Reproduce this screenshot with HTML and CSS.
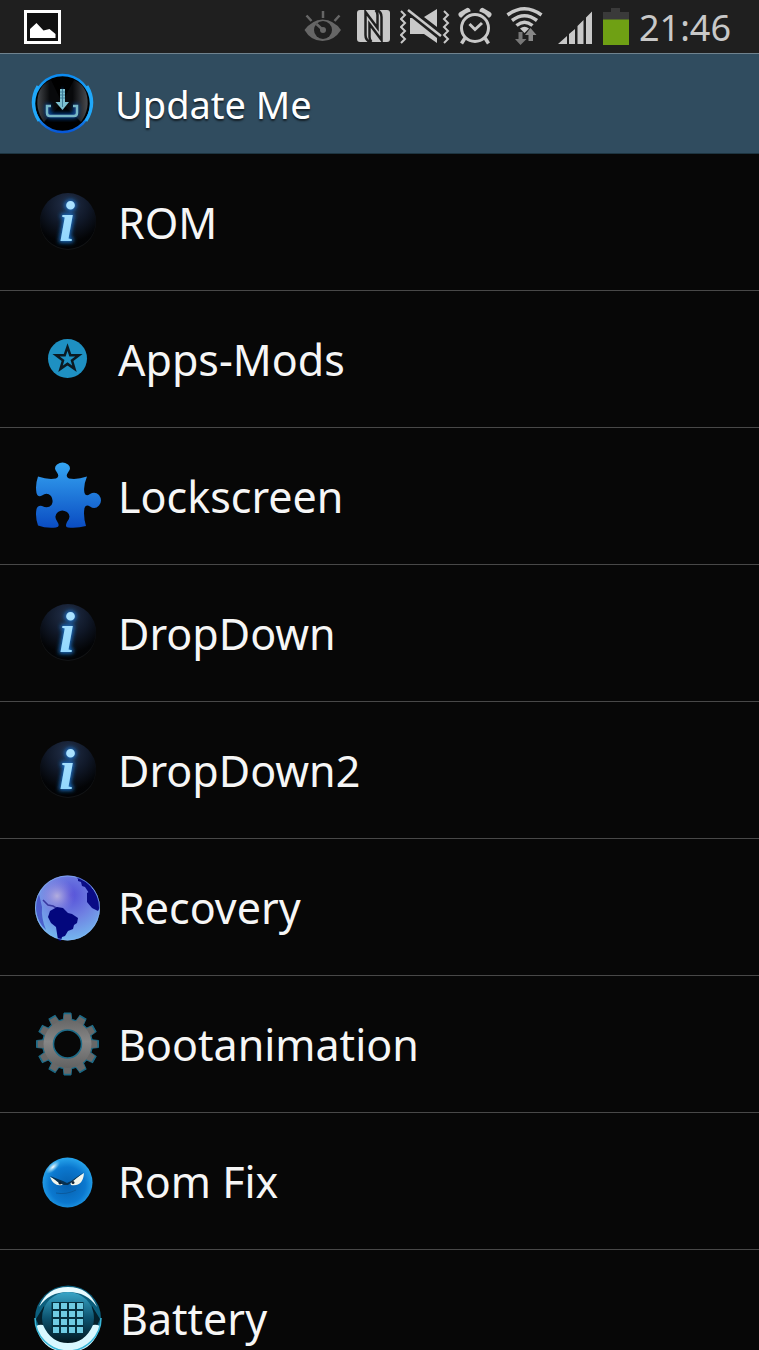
FILE: index.html
```html
<!DOCTYPE html>
<html lang="en">
<head>
    <meta charset="UTF-8">
    <meta name="viewport" content="width=device-width, initial-scale=1.0">
    <title>Update Me</title>
    <link rel="stylesheet" href="styles.css">
</head>
<body>
    <!-- shared icon shapes -->
    <svg class="defs" width="0" height="0" aria-hidden="true">
        <defs>
            <radialGradient id="ballFill" cx="50%" cy="20%" r="75%">
                <stop offset="0" stop-color="#22304a"/>
                <stop offset="0.5" stop-color="#101828"/>
                <stop offset="0.9" stop-color="#030406"/>
                <stop offset="1" stop-color="#020305"/>
            </radialGradient>
            <linearGradient id="infoFill" x1="0" y1="0" x2="0" y2="1">
                <stop offset="0" stop-color="#b4e6ff"/>
                <stop offset="1" stop-color="#8ad4fd"/>
            </linearGradient>
            <filter id="glow" x="-50%" y="-50%" width="200%" height="200%">
                <feGaussianBlur stdDeviation="2"/>
            </filter>
            <symbol id="info" viewBox="0 0 68 68">
                <circle cx="35" cy="34" r="28" fill="#131517"/>
                <circle cx="35" cy="33" r="28" fill="url(#ballFill)"/>
                <text x="26" y="53" class="info-letter info-glow" filter="url(#glow)">i</text>
                <text x="26" y="53" class="info-letter" fill="url(#infoFill)">i</text>
            </symbol>
            <g id="tooth">
                <path d="M30 12L31 3h7l1 9zM30 55l1 10h7l1-10z"/>
            </g>
            <g id="gear">
                <circle cx="34.5" cy="34" r="25"/>
                <use href="#tooth"/>
                <use href="#tooth" transform="rotate(30 34.5 34)"/>
                <use href="#tooth" transform="rotate(60 34.5 34)"/>
                <use href="#tooth" transform="rotate(90 34.5 34)"/>
                <use href="#tooth" transform="rotate(120 34.5 34)"/>
                <use href="#tooth" transform="rotate(150 34.5 34)"/>
            </g>
        </defs>
    </svg>

    <div class="screen">
        <div class="status-bar">
            <svg class="picture" width="38" height="53" viewBox="0 0 38 53" aria-hidden="true">
                <rect x="1.5" y="11.5" width="34" height="31" fill="#111" stroke="#fff" stroke-width="3"/>
                <path d="M6 38V29l6.500-6 7 7.500 6-1.500 6 5v4z" fill="#fff"/>
            </svg>
            <div class="status-icons">
                <svg width="46" height="53" viewBox="0 0 46 53" aria-hidden="true">
                    <path d="M1.500 30Q9 20 19.500 19.500 31 20 38 30 31 41 19.500 41 8 41 1.500 30z" fill="#666"/>
                    <circle cx="20" cy="30" r="9" fill="#1f1f1f"/>
                    <circle cx="20" cy="30" r="3" fill="#666"/>
                    <path d="M20 30L13.500 24M3.500 15.500l5 5.500M20 11v7M36.500 15.500l-5 5.500" stroke="#666" stroke-width="2.500"/>
                </svg>
                <svg width="35" height="53" viewBox="0 0 35 53" aria-hidden="true">
                    <rect y="10" width="33" height="32" rx="3" fill="#c8c8c8"/>
                    <path d="M13 42Q8.500 40 8.500 35V12L20.500 28V15q0-3-2-5" fill="none" stroke="#1f1f1f" stroke-width="2.500"/>
                    <path d="M20 10q4.500 2 4.500 7v23L12.500 24v13q0 3 2 5" fill="none" stroke="#1f1f1f" stroke-width="2.500"/>
                </svg>
                <svg width="50" height="53" viewBox="0 0 50 53" aria-hidden="true">
                    <path d="M10 18v16h14l13 9v-5L12 18zM37 9v18L24 17z" fill="#c8c8c8"/>
                    <path d="M8 10l33 26" stroke="#1f1f1f" stroke-width="6"/>
                    <path d="M8 10l33 26" stroke="#c8c8c8" stroke-width="2.500"/>
                    <path d="M1 11l4 4-4 4 4 4-4 4 4 4-4 4 4 4-4 4M44 11l4 4-4 4 4 4-4 4 4 4-4 4 4 4-4 4" fill="none" stroke="#c8c8c8" stroke-width="2"/>
                </svg>
                <svg width="36" height="53" viewBox="0 0 36 53" aria-hidden="true">
                    <path d="M3.500 14.500l6-3.500M30.500 14.500l-6-3.500" stroke="#c8c8c8" stroke-width="6" stroke-linecap="round"/>
                    <circle cx="17" cy="28" r="17" fill="#1f1f1f"/>
                    <circle cx="17" cy="28" r="13.500" fill="none" stroke="#c8c8c8" stroke-width="3"/>
                    <path d="M11.500 24l5.500 5.500 7-6.500" fill="none" stroke="#c8c8c8" stroke-width="3"/>
                    <path d="M7 38l-3.500 5.500M27 38l3.500 5.500" stroke="#c8c8c8" stroke-width="3.500"/>
                </svg>
                <svg width="45" height="53" viewBox="0 0 45 53" aria-hidden="true">
                    <path d="M5.500 15q17-12.500 34 0M10 20.500q12.500-9.500 25 0M14.500 25.500q8-6.500 16 0" fill="none" stroke="#c8c8c8" stroke-width="3.500"/>
                    <path d="M18 28.500q4.500-3.500 9 0L22.500 33z" fill="#c8c8c8"/>
                    <path d="M16.500 32h4v7h4L18.500 45 13 39h3.500z" fill="#777"/>
                    <path d="M26.500 41v-6H23l5.500-7 6 7H31v6z" fill="#888"/>
                </svg>
                <svg width="40" height="53" viewBox="0 0 40 53" aria-hidden="true">
                    <path d="M3 44l9-8v8zM14 44V34l6-5v15zM22.500 44V26l6-6v24zM31 44V17.500l6-6V44z" fill="#c8c8c8"/>
                </svg>
                <svg width="28" height="53" viewBox="0 0 28 53" aria-hidden="true">
                    <path d="M0 12h8V8h9v4h9v8H0z" fill="#3a3a3a"/>
                    <path d="M0 19.500h26V45H0z" fill="#6fa014"/>
                </svg>
                <time class="clock">21:46</time>
            </div>
        </div>

        <header class="title-bar">
            <svg width="64" height="64" viewBox="0 0 64 64" aria-hidden="true">
                <defs>
                    <linearGradient id="ring" x1="0" y1="0" x2="0" y2="1">
                        <stop offset="0" stop-color="#0c8af0"/>
                        <stop offset="0.5" stop-color="#25b9ff"/>
                        <stop offset="1" stop-color="#0757d8"/>
                    </linearGradient>
                    <linearGradient id="lens" x1="0" y1="0" x2="1" y2="0">
                        <stop offset="0" stop-color="#44474b"/>
                        <stop offset="0.25" stop-color="#08090b"/>
                        <stop offset="0.7" stop-color="#08090b"/>
                        <stop offset="1" stop-color="#4a4c50"/>
                    </linearGradient>
                </defs>
                <circle cx="31.500" cy="31.500" r="28.500" fill="#000" stroke="url(#ring)" stroke-width="2.500"/>
                <path d="M7 14Q-3 31 8 49M56 14q10 17-1 35" fill="none" stroke="#20a8fa" stroke-width="3"/>
                <path d="M8 20Q12 11 20 8L31 31 13 50Q3 36 8 20zM55 20Q51 11 43 8L31 31 50 50Q60 36 55 20z" fill="url(#lens)"/>
                <path d="M17 32v9q0 3 3 3h22q3 0 3-3v-9" fill="none" stroke="#0b4aa0" stroke-width="5" filter="url(#glow)"/>
                <path d="M31 18v14h1" stroke="#0b4aa0" stroke-width="7" filter="url(#glow)"/>
                <path d="M20 34h-4v7q0 3 3 3h24q3 0 3-3v-7h-4" fill="none" stroke="#76b6c5" stroke-width="2.500"/>
                <path d="M29 17h5v13h4l-6.500 8-7-8H29z" fill="#7cc0d0"/>
                <path d="M31.500 17v18M29 20h5M29 23h5M29 26h5" stroke="#417f9a" stroke-width="1"/>
            </svg>
            <h1>Update Me</h1>
        </header>

        <nav class="menu">
            <a href="#rom">
                <svg class="icon" viewBox="0 0 68 68" aria-hidden="true"><use href="#info"/></svg>
                ROM
            </a>
            <a href="#apps">
                <svg class="icon" viewBox="0 0 68 68" aria-hidden="true">
                    <circle cx="34.500" cy="33.500" r="19.500" fill="#1e90c2"/>
                    <path d="M34.500 22l2.800 8.200 8.600.1-6.900 5.200 2.500 8.300-7-4.900-7 4.900 2.500-8.300-6.900-5.200 8.600-.1z" fill="#1e90c2" stroke="#0b1a22" stroke-width="2.500"/>
                </svg>
                Apps-Mods
            </a>
            <a href="#lockscreen">
                <svg class="icon" viewBox="0 0 68 68" aria-hidden="true">
                    <defs>
                        <linearGradient id="puzzle" x1="0" y1="0" x2="0" y2="1">
                            <stop offset="0" stop-color="#35a5f2"/>
                            <stop offset="1" stop-color="#0a4cc2"/>
                        </linearGradient>
                    </defs>
                    <path d="M5 14.500Q15 18 23 16.500 27 15 24 10.500 20 6 24 2.500 29.500-1.500 35 2.500 39 6 35 10.500 32 15 36 16.500 44 18 54 14.500 50 24 51.500 31 53 35 57 32 62 29 66 33 70 38.500 66 43.500 62 48 57 44.500 53 42 51.500 46 50 54 53 64 44 66.500 35 65.500 31.500 65 34 60 39 54 34 50 29 47 25 50 20 54 24.500 60 27.500 65 23 65.500 13 66.500 5 63.500 2 55 3.500 47 5 43 9 44 15 47 18.500 43 21 38.500 18 34 14 30 9 33.500 5 36 3.500 31 2 23 5 14.500z" fill="url(#puzzle)"/>
                </svg>
                Lockscreen
            </a>
            <a href="#dropdown">
                <svg class="icon" viewBox="0 0 68 68" aria-hidden="true"><use href="#info"/></svg>
                DropDown
            </a>
            <a href="#dropdown2">
                <svg class="icon" viewBox="0 0 68 68" aria-hidden="true"><use href="#info"/></svg>
                DropDown2
            </a>
            <a href="#recovery">
                <svg class="icon" viewBox="0 0 68 68" aria-hidden="true">
                    <defs>
                        <radialGradient id="ocean" cx="55%" cy="30%" r="68%">
                            <stop offset="0" stop-color="#5550d8"/>
                            <stop offset="0.5" stop-color="#6f80e2"/>
                            <stop offset="1" stop-color="#74b4ee"/>
                        </radialGradient>
                        <radialGradient id="shine" cx="50%" cy="50%" r="50%">
                            <stop offset="0" stop-color="#b3aede"/>
                            <stop offset="1" stop-color="#8b86e0" stop-opacity="0"/>
                        </radialGradient>
                    </defs>
                    <circle cx="34.500" cy="35" r="32.500" fill="url(#ocean)"/>
                    <circle cx="24" cy="23" r="18" fill="url(#shine)"/>
                    <path d="M6 21Q2 28 3 38 5 50 13 57 8 45 9 34z" fill="#3030b8" opacity=".6"/>
                    <path d="M10 27l5 5 5 1 5 3 5 1" fill="none" stroke="#3838a0" stroke-width="1.500"/>
                    <path d="M17 38l7-4 6 1 5 5 4 1 6 4-1 5-3 2-1 4-5 2-3 5-3 1-1 4-3-1-2-13-5-4-3-6z" fill="#03077d"/>
                    <path d="M54 20l6-4q6 8 7 19l-2 3-6-3-5-6zM45 6l-2-2q9 2 15 9l3 6-5 1-4-6-3-1-1-4-3-1z" fill="#0a0c86"/>
                    <circle cx="34.500" cy="35" r="32" fill="none" stroke="#87b8f4" stroke-width="1" opacity=".6"/>
                </svg>
                Recovery
            </a>
            <a href="#bootanimation">
                <svg class="icon" viewBox="0 0 68 68" aria-hidden="true">
                    <defs>
                        <linearGradient id="steel" gradientUnits="userSpaceOnUse" x1="0" y1="9" x2="0" y2="59">
                            <stop offset="0" stop-color="#666"/>
                            <stop offset="0.45" stop-color="#868686"/>
                            <stop offset="1" stop-color="#606060"/>
                        </linearGradient>
                    </defs>
                    <use href="#gear" fill="#1d6c89" stroke="#1d6c89" stroke-width="1"/>
                    <g transform="translate(1.400 1.400) scale(.96)"><use href="#gear" fill="#686868"/></g>
                    <circle cx="34.500" cy="34" r="24" fill="url(#steel)"/>
                    <circle cx="34.500" cy="34" r="14" fill="#070707" stroke="#1d6c89" stroke-width="1.500"/>
                </svg>
                Bootanimation
            </a>
            <a href="#romfix">
                <svg class="icon" viewBox="0 0 68 68" aria-hidden="true">
                    <defs>
                        <radialGradient id="face" cx="50%" cy="55%" r="55%">
                            <stop offset="0" stop-color="#0660ae"/>
                            <stop offset="0.65" stop-color="#0b78cf"/>
                            <stop offset="1" stop-color="#27a6ed"/>
                        </radialGradient>
                        <radialGradient id="spot">
                            <stop offset="0" stop-color="#fff"/>
                            <stop offset="1" stop-color="#8fd6f4" stop-opacity="0"/>
                        </radialGradient>
                    </defs>
                    <circle cx="34.500" cy="35.500" r="25" fill="url(#face)"/>
                    <ellipse cx="20" cy="20" rx="9" ry="4" transform="rotate(-42 20 20)" fill="url(#spot)"/>
                    <path d="M17 30l14 6-2 2q-8 2-12-8zM51 26l-14 9 1 3q12 2 13-12z" fill="#f3f6ec"/>
                    <path d="M17 29l13 5 4 2 4-2 13-9-12 10-4 3h-4l-5-2z" fill="#07304f"/>
                    <circle cx="27" cy="36" r="1.500" fill="#123"/>
                    <circle cx="40" cy="35.500" r="1.500" fill="#123"/>
                    <path d="M23 46q10 2 20-3" fill="none" stroke="#0a5a9e" stroke-width="1"/>
                </svg>
                Rom Fix
            </a>
            <a href="#battery">
                <svg class="icon icon-wide" viewBox="0 0 70 68" aria-hidden="true">
                    <defs>
                        <linearGradient id="dial" x1="0" y1="0" x2="0" y2="1">
                            <stop offset="0" stop-color="#39a6c8"/>
                            <stop offset="0.5" stop-color="#0d5470"/>
                            <stop offset="1" stop-color="#02151d"/>
                        </linearGradient>
                    </defs>
                    <circle cx="35" cy="34.500" r="33" fill="#0c5f7d"/>
                    <path d="M6 23Q14 3 35 3t29 20Q54 8 35 8T6 23z" fill="#e8fbff"/>
                    <path d="M3 35l8-13 3 14-7 8zM67 35l-8-13-3 14 7 8z" fill="#03202c"/>
                    <circle cx="35" cy="34" r="26" fill="url(#dial)"/>
                    <path d="M3 42q4-2 7-1 8 18 25 18t25-18q3-1 7 1-6 26-32 26T3 42z" fill="#d9f8ff"/>
                    <path d="M2 34a33 33 0 0 0 66 0" fill="none" stroke="#38b5d6" stroke-width="1.500"/>
                    <path d="M22.500 18v32M30.500 18v32M38.500 18v32M46.500 18v32" stroke="#06303f" stroke-width="8"/>
                    <path d="M23 19v32M31 19v32M39 19v32M47 19v32" stroke="#6fcbe2" stroke-width="6" stroke-dasharray="6 2"/>
                </svg>
                Battery
            </a>
        </nav>
    </div>
</body>
</html>
```

FILE: styles.css
```css
body {
    margin: 0;
    font-family: 'Noto Sans', 'Open Sans', sans-serif;
    background-color: #070707;
    color: #f6f6f6;
}

.defs {
    position: absolute;
}

.screen {
    display: flex;
    flex-direction: column;
    height: 100vh;
}

.status-bar {
    display: flex;
    justify-content: space-between;
    flex-shrink: 0;
    padding: 0 28px 0 24px;
    background-color: #1f1f1f;
}

.status-bar svg {
    display: block;
}

.status-icons {
    display: flex;
    gap: 8px;
}

.clock {
    font-size: 36px;
    line-height: 56px;
    height: 53px;
    color: #c8c8c8;
}

.title-bar {
    display: flex;
    align-items: center;
    flex-shrink: 0;
    gap: 20px;
    height: 99px;
    padding-left: 31px;
    background-color: #304c5f;
    border-top: 1px solid #70838f;
    border-bottom: 1px solid #1d3440;
}

.title-bar h1 {
    margin: 0;
    font-size: 38px;
    font-weight: 400;
    line-height: 52px;
    color: #fff;
    text-shadow: 0 2px 2px rgba(0, 0, 0, 0.6);
}

.menu {
    flex: 1;
    min-height: 0;
    overflow-y: auto;
    scrollbar-width: none;
}

.menu a {
    display: flex;
    align-items: center;
    gap: 17px;
    height: 136px;
    padding-left: 33px;
    border-bottom: 1px solid #484848;
    font-size: 43px;
    color: #f6f6f6;
    text-decoration: none;
}

.menu a:active {
    background-color: #304c5f;
}

.icon {
    width: 68px;
    height: 68px;
    flex-shrink: 0;
}

.icon-wide {
    width: 70px;
}

.info-letter {
    font-family: 'Liberation Serif', serif;
    font-size: 58px;
    font-style: italic;
    font-weight: 700;
}

.info-glow {
    fill: #1b6fc4;
    stroke: #1b6fc4;
    stroke-width: 3px;
}
```
